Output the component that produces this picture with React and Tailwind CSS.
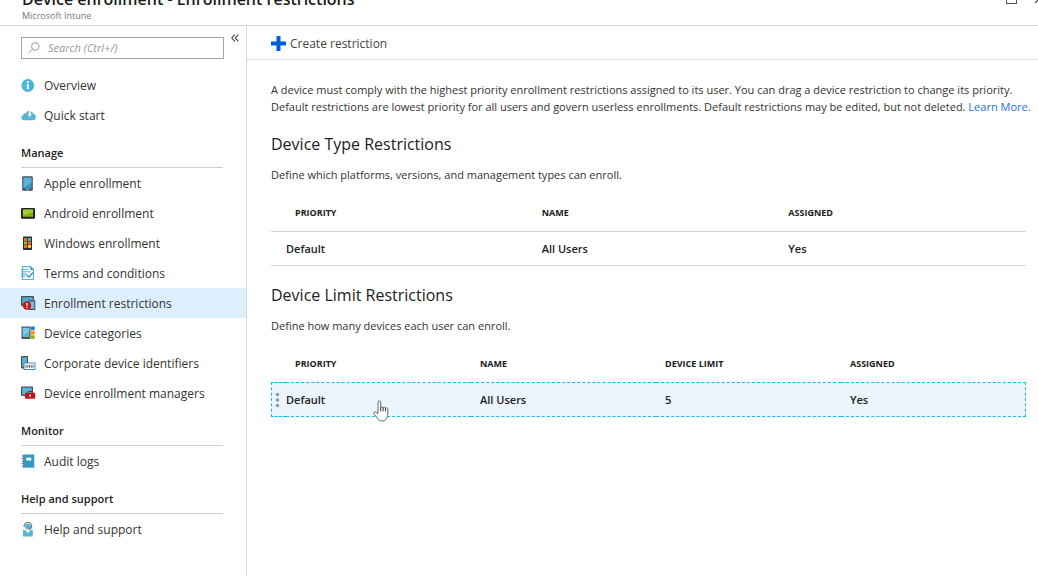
import { useState } from 'react'
import clsx from 'clsx'

function InfoIcon() {
  return (
    <svg viewBox="0 0 16 16" className="size-4" aria-hidden="true">
      <circle cx="6.800" cy="7.500" r="6.400" fill="#4fb4dc" />
      <rect x="5.900" y="6.200" width="1.800" height="5" fill="#fff" />
      <circle cx="6.800" cy="4.200" r="1.100" fill="#fff" />
    </svg>
  )
}

function CloudIcon() {
  return (
    <svg viewBox="0 0 16 16" className="size-4" aria-hidden="true">
      <path d="M2.600 12.200a2.600 2.600 0 0 1-.4-5.100 2.300 2.300 0 0 1 2.600-1.900 4.200 4.200 0 0 1 7.600.6 3.250 3.250 0 0 1-.6 6.400z" fill="#59b4d9" />
      <path d="M8.900 2.800 6.700 7.200h1.700L7.300 10.600l3.600-4.500H9.200l1.500-3.300z" fill="#fff" />
    </svg>
  )
}

function TabletIcon() {
  return (
    <svg viewBox="0 0 16 16" className="size-4" aria-hidden="true">
      <rect x="1.200" y="0.200" width="10.600" height="14.600" rx="1" fill="#4a4f55" />
      <rect x="2.500" y="1.700" width="8" height="11.100" fill="#3999c6" />
      <path d="M10.500 1.700v5l-8 5V1.700z" fill="#59b4d9" />
      <rect x="5.500" y="13.300" width="2" height="0.800" fill="#ddd" />
    </svg>
  )
}

function AndroidIcon() {
  return (
    <svg viewBox="0 0 16 16" className="size-4" aria-hidden="true">
      <rect x="0" y="2" width="14" height="10.800" rx="1.400" fill="#1e1e1e" />
      <rect x="1.900" y="3.600" width="10.200" height="7.200" fill="#7fba00" />
      <path d="M1.900 3.600h10.200v2.200L1.900 9.800z" fill="#a5ce3f" />
    </svg>
  )
}

function WindowsPhoneIcon() {
  return (
    <svg viewBox="0 0 16 16" className="size-4" aria-hidden="true">
      <rect x="2" y="0.500" width="9" height="13.500" rx="0.800" fill="#2b2b2b" />
      <path d="M3 2h3.100v2.900H3zM6.900 5.500H10v2.900H6.900zM3 9h3.100v2.900H3z" fill="#f0701b" />
      <path d="M6.900 2H10v2.900H6.900z" fill="#4fb4dc" />
      <path d="M3 5.500h3.100v2.900H3z" fill="#8bc34a" />
      <path d="M6.900 9H10v2.900H6.900z" fill="#fcd116" />
    </svg>
  )
}

function TermsIcon() {
  return (
    <svg viewBox="0 0 16 16" className="size-4" aria-hidden="true">
      <path d="M1.500.7h8l3 3v9.800h-11z" fill="#fff" stroke="#59b4d9" strokeWidth="1.200" />
      <path d="M9.300.2v3.700H13z" fill="#3999c6" />
      <path d="M0 3.500h7.500M0 5.700h9.500M0 7.900h5.500M0 10.100h4.500" stroke="#59b4d9" strokeWidth="1.100" />
      <path d="m5.600 8.800 2.300 2.400 4-4.800" fill="none" stroke="#3999c6" strokeWidth="1.500" />
    </svg>
  )
}

function RestrictionIcon() {
  return (
    <svg viewBox="0 0 16 16" className="size-4" aria-hidden="true">
      <rect x="0" y="0" width="13" height="10" rx="0.800" fill="#4a4f55" />
      <rect x="1.200" y="1.200" width="10.600" height="7.600" fill="#4aa9d3" />
      <rect x="7.500" y="4.300" width="6.800" height="9.800" rx="0.700" fill="#4a4f55" />
      <rect x="8.500" y="5.400" width="4.800" height="7.400" fill="#6dbfe0" />
      <circle cx="5.900" cy="9.500" r="4.200" fill="#c4161c" />
      <path d="M5.200 6.900h1.500l-.2 3.300h-1zM5.300 10.900h1.300v1.200H5.300z" fill="#fff" />
    </svg>
  )
}

function CategoriesIcon() {
  return (
    <svg viewBox="0 0 16 16" className="size-4" aria-hidden="true">
      <rect x="0.500" y="0.500" width="9" height="12.500" rx="0.800" fill="#4a4f55" />
      <rect x="1.700" y="1.800" width="6.600" height="9.300" fill="#59b4d9" />
      <path d="M8.300 1.800v4l-6.600 3.700V1.800z" fill="#7cc7e6" />
      <rect x="10" y="0.500" width="3.600" height="3.600" fill="#2272c3" />
      <rect x="10" y="4.900" width="3.600" height="3.600" fill="#ff8c00" />
      <rect x="10" y="9.300" width="3.600" height="3.600" fill="#7fba00" />
    </svg>
  )
}

function IdentifiersIcon() {
  return (
    <svg viewBox="0 0 16 16" className="size-4" aria-hidden="true">
      <rect x="0" y="0" width="7" height="12.500" rx="0.800" fill="#4a4f55" />
      <rect x="1.100" y="1.300" width="4.800" height="9.500" fill="#59b4d9" />
      <rect x="3" y="7" width="11" height="6.500" fill="#fff" stroke="#3c8fc7" />
      <path d="M5 8.800v3M6.800 8.800v3M8.500 8.800v3M10.300 8.800v3M12 8.800v3" stroke="#555" strokeWidth="0.900" />
    </svg>
  )
}

function ManagersIcon() {
  return (
    <svg viewBox="0 0 16 16" className="size-4" aria-hidden="true">
      <rect x="0" y="0.500" width="12" height="9.500" rx="0.800" fill="#4a4f55" />
      <rect x="1.200" y="1.700" width="9.600" height="7" fill="#59b4d9" />
      <path d="M7.200 7V5.500h4V7" fill="none" stroke="#a3151a" />
      <rect x="4" y="6.800" width="10.200" height="6" rx="0.700" fill="#c4161c" />
      <path d="M4 9.500h10.200" stroke="#8a0f13" strokeWidth="0.800" />
      <rect x="8.200" y="8.800" width="1.800" height="1.600" fill="#fff" />
    </svg>
  )
}

function LogIcon() {
  return (
    <svg viewBox="0 0 16 16" className="size-4" aria-hidden="true">
      <rect x="2" y="0.500" width="11.300" height="13.200" fill="#3999c6" />
      <rect x="5.200" y="3.700" width="5" height="2.800" fill="#fff" />
      <path d="M0.500 2h3M0.500 4.500h3M0.500 7h3M0.500 9.500h3M0.500 12h3" stroke="#7a7a7a" />
    </svg>
  )
}

function SupportIcon() {
  return (
    <svg viewBox="0 0 16 16" className="size-4" aria-hidden="true">
      <path d="M2 8h9.800v6.500H2z" fill="#59b4d9" />
      <path d="m4.200 8 2.700 3.200L9.600 8z" fill="#fff" />
      <circle cx="7" cy="4.500" r="3" fill="#59b4d9" />
      <path d="M3.100 5v-.9a3.800 3.800 0 0 1 7.600 0c0 2-.8 3.200-2.600 3.500" fill="none" stroke="#777" strokeWidth="1.100" />
    </svg>
  )
}

const NAV = [
  {
    items: [
      { label: 'Overview', Icon: InfoIcon },
      { label: 'Quick start', Icon: CloudIcon },
    ],
  },
  {
    title: 'Manage',
    items: [
      { label: 'Apple enrollment', Icon: TabletIcon },
      { label: 'Android enrollment', Icon: AndroidIcon },
      { label: 'Windows enrollment', Icon: WindowsPhoneIcon },
      { label: 'Terms and conditions', Icon: TermsIcon },
      { label: 'Enrollment restrictions', Icon: RestrictionIcon },
      { label: 'Device categories', Icon: CategoriesIcon },
      { label: 'Corporate device identifiers', Icon: IdentifiersIcon },
      { label: 'Device enrollment managers', Icon: ManagersIcon },
    ],
  },
  { title: 'Monitor', items: [{ label: 'Audit logs', Icon: LogIcon }] },
  { title: 'Help and support', items: [{ label: 'Help and support', Icon: SupportIcon }] },
]

function Header() {
  return (
    <header className="flex items-end justify-between overflow-hidden border-b border-[#d6d6d6] pl-[22px]">
      <div className="-mt-[13px]">
        <h1 className="text-base leading-6 font-semibold text-[#1a1a1a]">Device enrollment - Enrollment restrictions</h1>
        <p className="pb-[5px] text-[9px] leading-[9px] text-[#777]">Microsoft Intune</p>
      </div>
      <div className="flex gap-4 self-start">
        <button aria-label="Maximize" className="-mt-2">
          <svg viewBox="0 0 12 12" className="size-3" fill="none" stroke="#555">
            <rect x="0.5" y="0.5" width="10" height="11" />
          </svg>
        </button>
        <button aria-label="Close" className="-mt-2 -mr-2">
          <svg viewBox="0 0 12 12" className="size-3" fill="none" stroke="#444" strokeWidth="1.2">
            <path d="m1 11 10-10M1 1l10 10" />
          </svg>
        </button>
      </div>
    </header>
  )
}

function Sidebar({ active, onSelect }) {
  return (
    <aside className="w-[247px] shrink-0 border-r border-[#d6d6d6]">
      <div className="flex items-start gap-[7px] py-[11px] pl-[21px]">
        <label className="flex h-[22px] w-[203px] items-center border border-[#a6a6a6] pl-1.5">
          <svg viewBox="0 0 12 12" className="size-3 shrink-0" fill="none" stroke="#999">
            <circle cx="7.300" cy="4.500" r="3.800" />
            <path d="M4.500 7.200.5 11.300" />
          </svg>
          <input
            type="text"
            aria-label="Search"
            placeholder="Search (Ctrl+/)"
            className="ml-2 w-full min-w-0 text-[11px] italic outline-none placeholder:text-[#999]"
          />
        </label>
        <button aria-label="Collapse menu" className="-mt-1">
          <svg viewBox="0 0 8 10" className="h-2.5 w-2" fill="none" stroke="#333" strokeWidth="1.1">
            <path d="M3.800 1.500.8 5l3 3.500M7.300 1.500 4.300 5l3 3.500" />
          </svg>
        </button>
      </div>
      <nav>
        {NAV.map((group, i) => (
          <div key={i}>
            {group.title && (
              <h2 className="mr-[23px] ml-[21px] border-b border-[#d0d0d0] pt-[13px] pb-1 text-[11px] leading-5 font-semibold text-[#222]">
                {group.title}
              </h2>
            )}
            <ul>
              {group.items.map(({ label, Icon }) => (
                <li key={label}>
                  <button
                    onClick={() => onSelect(label)}
                    className={clsx(
                      'flex h-[30px] w-full items-center gap-[7px] pt-0.5 pl-[21px] text-left text-[#333]',
                      active === label && 'bg-[#dceffe]'
                    )}
                  >
                    <Icon />
                    {label}
                  </button>
                </li>
              ))}
            </ul>
          </div>
        ))}
      </nav>
    </aside>
  )
}

function HandCursor() {
  return (
    <svg viewBox="0 0 16 22" className="absolute top-[17px] left-[87px] h-[22px] w-4" aria-hidden="true">
      <path
        d="M5 13.500V2.200C5 .4 7.700.4 7.700 2.200V8c0-1.500 2.400-1.500 2.400.2 0-1.400 2.400-1.300 2.400.3 0-1.200 2.300-1.100 2.300.6V14c0 2-.6 3-1.200 4.200-.8 1.800-2.300 2.800-4.600 2.800-2.500 0-3.800-1.200-4.700-2.900L.9 13.800c-.7-1.600 1-2.500 2-1.400z"
        fill="#fff"
        stroke="#555"
        strokeWidth="0.9"
      />
      <path d="M7.700 7.500v3.800M10.100 8v3.300M12.500 8.500v2.800" stroke="#333" />
    </svg>
  )
}

function RestrictionTable({ columns, rows, selected = false }) {
  const cellBorder = selected
    ? 'border-y border-dashed border-[#12bdf0] first:border-l last:border-r'
    : 'border-y border-[#d4d4d4]'

  return (
    <table className="mt-2.5 w-full table-fixed border-separate border-spacing-0 text-left">
      <thead>
        <tr className="h-[38px]">
          <td className="w-[15px]"></td>
          {columns.map((c) => (
            <th key={c} className="pl-[9px] text-[9px] font-bold text-[#1a1a1a] uppercase">{c}</th>
          ))}
        </tr>
      </thead>
      <tbody>
        {rows.map((row) => (
          <tr key={row[0]} className={clsx('h-[35px]', selected && 'bg-[#ebf5fe]')}>
            <td className={cellBorder}>
              {selected && (
                <svg viewBox="0 0 12 16" className="h-4 w-3" fill="#8a97a5" aria-hidden="true">
                  <circle cx="5.500" cy="2.500" r="1.700" />
                  <circle cx="5.500" cy="8" r="1.700" />
                  <circle cx="5.500" cy="13.500" r="1.700" />
                </svg>
              )}
            </td>
            {row.map((value, i) => (
              <td key={i} className={clsx('relative text-[11px] font-semibold text-[#222]', i > 0 && 'pl-[9px]', cellBorder)}>
                {value}
                {selected && i === 0 && <HandCursor />}
              </td>
            ))}
          </tr>
        ))}
      </tbody>
    </table>
  )
}

function Section({ title, description, children }) {
  return (
    <section className="mt-[17px]">
      <h2 className="text-base leading-6 text-[#222]">{title}</h2>
      <p className="mt-2.5">{description}</p>
      {children}
    </section>
  )
}

export default function App() {
  const [active, setActive] = useState('Enrollment restrictions')

  return (
    <div className="flex min-h-screen flex-col bg-white font-['Open_Sans','Noto_Sans',sans-serif] text-xs text-[#333]">
      <Header />
      <div className="flex flex-1">
        <Sidebar active={active} onSelect={setActive} />
        <main className="min-w-0 flex-1">
          <div className="flex h-[34px] items-center border-b border-[#dedede] pt-0.5 pl-6">
            <button className="flex items-center gap-1 text-[#444]">
              <svg viewBox="0 0 15 15" className="size-[15px]" fill="#015cda" aria-hidden="true">
                <path d="M5.500 0h4v5.500H15v4H9.500V15h-4V9.500H0v-4h5.500z" />
              </svg>
              Create restriction
            </button>
          </div>
          <div className="pt-[21px] pr-3 pl-6 text-[11px] leading-[17px]">
            <p className="-mr-2.5">
              A device must comply with the highest priority enrollment restrictions assigned to its user. You can drag a device
              restriction to change its priority.
              <br />
              Default restrictions are lowest priority for all users and govern userless enrollments. Default restrictions may be
              edited, but not deleted. <a href="#learn-more" className="text-[#1b72e2]">Learn More.</a>
            </p>
            <Section title="Device Type Restrictions" description="Define which platforms, versions, and management types can enroll.">
              <RestrictionTable columns={['Priority', 'Name', 'Assigned']} rows={[['Default', 'All Users', 'Yes']]} />
            </Section>
            <Section title="Device Limit Restrictions" description="Define how many devices each user can enroll.">
              <RestrictionTable
                columns={['Priority', 'Name', 'Device limit', 'Assigned']}
                rows={[['Default', 'All Users', '5', 'Yes']]}
                selected
              />
            </Section>
          </div>
        </main>
      </div>
    </div>
  )
}
